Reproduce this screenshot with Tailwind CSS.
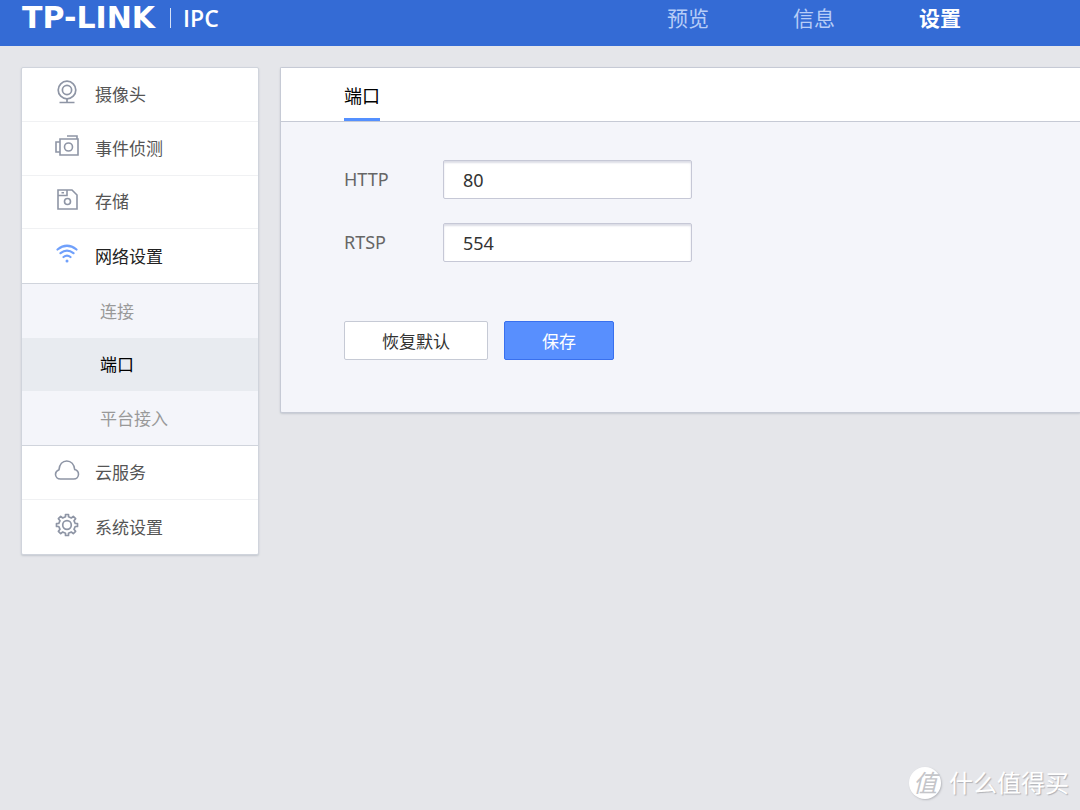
<!DOCTYPE html>
<html lang="zh-CN">
<head>
<meta charset="utf-8">
<meta name="viewport" content="width=device-width, initial-scale=1">
<title>TP-LINK IPC</title>
<script src="https://cdn.jsdelivr.net/npm/@tailwindcss/browser@4"></script>
</head>
<body class="flex min-h-screen flex-col overflow-x-hidden bg-[#e5e6ea] font-['Noto_Sans','Noto_Sans_CJK_SC',sans-serif] text-[17px] text-[#555]">
<header class="flex h-[46px] items-center justify-between bg-[#346bd5] pr-[119px] pb-[10px] pl-[22px] text-white">
  <div class="flex items-center">
    <span class="w-[136px] font-['DejaVu_Sans'] text-[30px] leading-9 font-bold whitespace-nowrap">TP-LINK</span>
    <span class="ml-3 h-5 w-px bg-white/80"></span>
    <span class="ml-3 font-['Open_Sans'] text-[23px] leading-9 font-semibold">IPC</span>
  </div>
  <nav class="flex gap-[84px] text-[21px] leading-9">
    <a href="#" class="text-[#b7cdf7]">预览</a>
    <a href="#" class="text-[#b7cdf7]">信息</a>
    <a href="#" class="font-bold">设置</a>
  </nav>
</header>
<div class="flex grow items-start gap-[21px] pt-[21px] pl-[21px]">
  <aside class="w-[238px] shrink-0 rounded-xs border border-[#d0d4dc] bg-white shadow-[0_1px_2px_#c3c7ce]">
    <nav>
      <a href="#" class="flex h-[54px] items-center gap-[15px] border-b border-[#f0f1f3] pt-px pl-8">
        <svg class="mb-1.5 size-[26px]" viewBox="0 0 26 26" fill="none" stroke="#8e95a5" stroke-width="1.7"><circle cx="13" cy="11" r="8.800"/><circle cx="13" cy="11" r="4.6"/><path d="M13 20v3.500M5.500 23.500h15"/></svg>
        <span>摄像头</span>
      </a>
      <a href="#" class="flex h-[54px] items-center gap-[15px] border-b border-[#f0f1f3] pt-px pl-8">
        <svg class="mb-1.5 size-[26px]" viewBox="0 0 26 26" fill="none" stroke="#8e95a5" stroke-width="1.6"><path d="M6 6h18v16H6zM6 9H2v10h4M13 3h10v3"/><circle cx="14.500" cy="14" r="4"/></svg>
        <span>事件侦测</span>
      </a>
      <a href="#" class="flex h-[53px] items-center gap-[15px] border-b border-[#f0f1f3] pl-8">
        <svg class="mb-1.5 size-[26px]" viewBox="0 0 26 26" fill="none" stroke="#8e95a5" stroke-width="1.6"><path d="M4 4h14l5 5v14H4zM4 9.500h9V4M7.500 6.800h2.500"/><circle cx="13.500" cy="15.500" r="3"/></svg>
        <span>存储</span>
      </a>
      <a href="#" class="flex h-[54px] items-center gap-[15px] pt-px pl-8 text-[#222]">
        <svg class="mb-1.5 size-[26px]" viewBox="0 0 26 26" fill="none" stroke="#70a0fb" stroke-width="2.200" stroke-linecap="round"><path d="M3.500 8.500Q13 1 22.500 8.500M6.500 12.200Q13 7 19.500 12.200M9.500 16Q13 13.200 16.500 16"/><circle cx="13" cy="20" r="1.500" fill="#70a0fb" stroke="none"/></svg>
        <span>网络设置</span>
      </a>
      <div class="border-y border-[#d0d4dc] bg-[#f4f5fa] text-[#999]">
        <a href="#" class="flex h-[54px] items-center pt-px pl-[78px]">连接</a>
        <a href="#" class="flex h-[53px] items-center bg-[#e8ebf0] pt-px pl-[78px] text-black">端口</a>
        <a href="#" class="flex h-[54px] items-center pt-px pl-[78px]">平台接入</a>
      </div>
      <a href="#" class="flex h-[54px] items-center gap-[15px] border-b border-[#f0f1f3] pt-px pl-8">
        <svg class="mb-1.5 size-[26px]" viewBox="0 0 26 26" fill="none" stroke="#8e95a5" stroke-width="1.600"><path d="M6.500 22C3.500 22 1.500 20 1.500 17.300c0-2.300 1.500-3.800 3.500-4.600C5.500 7.500 8.500 4 12.800 4c4.200 0 7.300 3.300 7.900 8.500 2.300.6 3.800 2.500 3.800 4.800 0 2.700-2 4.700-4.800 4.700z"/></svg>
        <span>云服务</span>
      </a>
      <a href="#" class="flex h-[54px] items-center gap-[15px] pt-px pl-8">
        <svg class="mb-1.5 size-[26px]" viewBox="0 0 26 26" fill="none" stroke="#8e95a5" stroke-width="1.700" stroke-linejoin="round"><path d="M11.500 2.500h3v2.300l2.800 1.200 2-1.600 2.300 2.300-1.600 2 1.200 2.800h2.300v3h-2.300L20 17.300l1.600 2-2.300 2.300-2-1.600-2.800 1.200v2.300h-3v-2.300L8.700 20l-2 1.600-2.300-2.300 1.600-2-1.200-2.800H2.500v-3h2.300L6 8.700l-1.600-2 2.300-2.300 2 1.600 2.800-1.200z"/><circle cx="13" cy="13" r="4.300"/></svg>
        <span>系统设置</span>
      </a>
    </nav>
  </aside>
  <main class="min-w-0 grow rounded-l-xs border border-r-0 border-[#c6cad5] bg-[#f4f5fa] shadow-[0_1px_2px_#c3c7ce]">
    <div class="flex h-[54px] items-end border-b border-[#c6cad5] bg-white pl-[63px]">
      <h1 class="border-b-3 border-[#5490ff] pb-1.5 text-[18px] leading-8 text-black">端口</h1>
    </div>
    <form class="px-[63px] pt-[38px] pb-[52px]">
      <div class="flex flex-col gap-6 text-[18px]">
        <div class="flex items-center">
          <label for="http" class="w-[99px] shrink-0 text-[#666]">HTTP</label>
          <input id="http" type="text" value="80" class="h-[39px] w-[249px] rounded-xs border border-[#c6c8d6] bg-white px-[19px] text-[#333] shadow-[inset_0_2px_2px_#dcdde6]">
        </div>
        <div class="flex items-center">
          <label for="rtsp" class="w-[99px] shrink-0 text-[#666]">RTSP</label>
          <input id="rtsp" type="text" value="554" class="h-[39px] w-[249px] rounded-xs border border-[#c6c8d6] bg-white px-[19px] text-[#333] shadow-[inset_0_2px_2px_#dcdde6]">
        </div>
      </div>
      <div class="mt-[59px] flex gap-4">
        <button type="button" class="h-[39px] w-36 rounded-xs border border-[#c6cad5] bg-white pt-0.5 text-[#333]">恢复默认</button>
        <button type="submit" class="h-[39px] w-[110px] rounded-xs border border-[#3970ee] bg-[#588ffe] pt-0.5 text-white">保存</button>
      </div>
    </form>
  </main>
</div>
<footer class="flex items-center justify-end gap-2 pr-[11px] pb-[11px] text-white">
  <span class="flex size-8 items-center justify-center rounded-full bg-white text-[24px] leading-8 text-[#c4c5c9] italic shadow-[1px_1px_2px_#b8b9be]">值</span>
  <span class="text-[24px] leading-8 text-shadow-[1px_1px_1px_#b0b1b6]">什么值得买</span>
</footer>
</body>
</html>
